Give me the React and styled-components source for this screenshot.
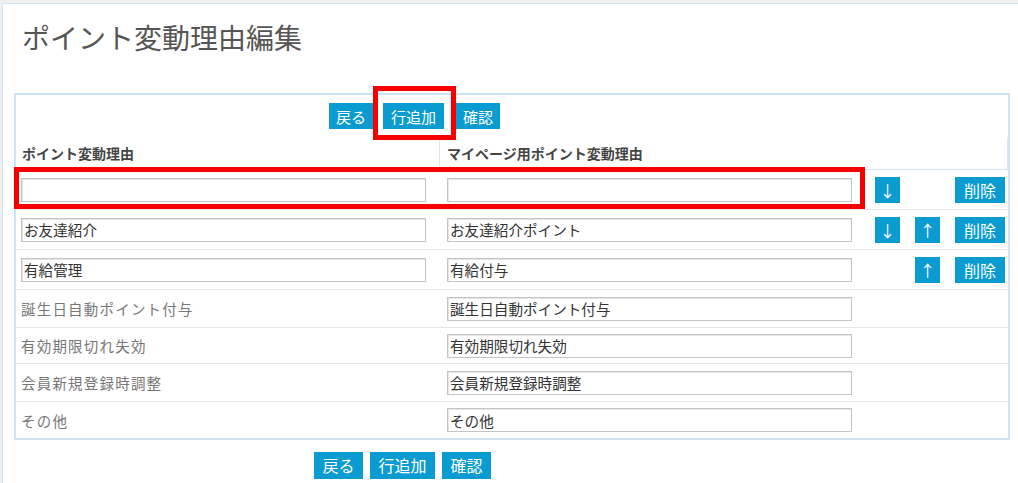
import React from "react";
import styled, { createGlobalStyle } from "styled-components";

const GlobalStyle = createGlobalStyle`
  html, body { margin: 0; padding: 0; }
  body {
    background: #efefef;
    font-family: "Noto Sans CJK JP", "Noto Sans", sans-serif;
    color: #333;
  }
`;

const Panel = styled.div`
  margin: 3px 0 0 2px;
  min-height: 480px;
  background: #fff;
  border-top: 1px solid #cfe4f5;
  border-left: 1px solid #cfe4f5;
`;

const Title = styled.h1`
  margin: 0;
  padding: 13px 0 0 19px;
  font-size: 28px;
  line-height: 40px;
  font-weight: 400;
  color: #555;
`;

const Box = styled.div`
  box-sizing: border-box;
  width: 996px;
  margin: 36px 0 0 11px;
  border: 2px solid #cfe3f4;
`;

const Toolbar = styled.div`
  display: flex;
  align-items: center;
  height: 42px;
  padding-left: ${(p) => p.$pl}px;
  margin-top: ${(p) => p.$mt || 0}px;
  gap: ${(p) => p.$gap || 0}px;
`;

const Button = styled.button`
  box-sizing: border-box;
  height: ${(p) => p.$h || 26}px;
  min-width: ${(p) => p.$w || 0}px;
  padding: 0 ${(p) => p.$px ?? 7}px;
  margin: 0 ${(p) => p.$mr || 0}px 0 0;
  border: none;
  background: #0a9bd0;
  color: #fff;
  font-family: "Noto Sans CJK JP", sans-serif;
  font-size: ${(p) => p.$fs || 15}px;
  line-height: 1;
  cursor: pointer;
  display: inline-flex;
  align-items: center;
  justify-content: center;
`;

const Marked = styled.span`
  position: relative;
  display: inline-flex;
`;

const Highlight = styled.span`
  position: absolute;
  top: ${(p) => p.$t}px;
  left: ${(p) => p.$l}px;
  right: ${(p) => p.$r}px;
  bottom: ${(p) => p.$b}px;
  border: 5px solid #f80000;
  pointer-events: none;
`;

const HeaderRow = styled.div`
  display: grid;
  grid-template-columns: 424px 1fr;
  height: 33px;
  box-sizing: border-box;
  border-bottom: 1px solid #cfe3f4;
`;

const HeaderCell = styled.div`
  display: flex;
  align-items: center;
  padding-left: ${(p) => p.$pl}px;
  font-size: 14px;
  font-weight: 700;
  color: #444;
  border-right: 1px solid #d8e7f4;
`;

const Row = styled.div`
  position: relative;
  display: grid;
  grid-template-columns: 424px 426px 1fr;
  align-items: center;
  box-sizing: border-box;
  height: ${(p) => p.$h}px;
  border-bottom: ${(p) => (p.$last ? "none" : "1px solid #e6e6e6")};
`;

const Cell = styled.div`
  padding-left: ${(p) => p.$pl}px;
  display: flex;
  align-items: center;
`;

const Input = styled.input`
  box-sizing: border-box;
  width: 405px;
  height: 24px;
  padding: 0 2px;
  border: 1px solid #c4c4c4;
  box-shadow: inset 1px 1px 0 #e6e6e6;
  font-family: "Noto Sans CJK JP", sans-serif;
  font-size: 14.6px;
  color: #333;
  background: #fff;
  outline: none;
`;

const Label = styled.span`
  font-size: 14.5px;
  letter-spacing: 1.2px;
  color: #777;
`;

const Actions = styled.div`
  display: grid;
  grid-template-columns: 40px 40px 50px;
  padding-left: 9px;
  align-items: center;
`;

const rows = [
  { a: "", b: "", input: true, down: true, up: false, del: true, h: 40, mark: true },
  { a: "お友達紹介", b: "お友達紹介ポイント", input: true, down: true, up: true, del: true, h: 40 },
  { a: "有給管理", b: "有給付与", input: true, down: false, up: true, del: true, h: 40 },
  { a: "誕生日自動ポイント付与", b: "誕生日自動ポイント付与", input: false, h: 38 },
  { a: "有効期限切れ失効", b: "有効期限切れ失効", input: false, h: 36 },
  { a: "会員新規登録時調整", b: "会員新規登録時調整", input: false, h: 38 },
  { a: "その他", b: "その他", input: false, h: 36 },
];

export default function App() {
  return (
    <>
      <GlobalStyle />
      <Panel>
        <Title>ポイント変動理由編集</Title>
        <Box>
          <Toolbar $pl={313}>
            <Button $mr={10}>戻る</Button>
            <Marked>
              <Button $mr={12} $px={8}>行追加</Button>
              <Highlight $t={-17} $l={-10} $r={0} $b={-11} />
            </Marked>
            <Button>確認</Button>
          </Toolbar>
          <HeaderRow>
            <HeaderCell $pl={6}>ポイント変動理由</HeaderCell>
            <HeaderCell $pl={7}>マイページ用ポイント変動理由</HeaderCell>
          </HeaderRow>
          {rows.map((r, i) => (
            <Row key={i} $h={r.h} $last={i === rows.length - 1}>
              <Cell $pl={5}>
                {r.input ? <Input defaultValue={r.a} /> : <Label>{r.a}</Label>}
              </Cell>
              <Cell $pl={7}>
                <Input defaultValue={r.b} />
              </Cell>
              <Actions>
                <span>{r.down && <Button $w={25} $px={0} $fs={16}>↓</Button>}</span>
                <span>{r.up && <Button $w={25} $px={0} $fs={16}>↑</Button>}</span>
                <span>{r.del && <Button $w={50} $px={0} $fs={16}>削除</Button>}</span>
              </Actions>
              {r.mark && <Highlight $t={-3} $l={-2} $r={143} $b={0} />}
            </Row>
          ))}
        </Box>
        <Toolbar $pl={311} $mt={4} $gap={7}>
          <Button $h={27} $fs={16} $px={8.5}>戻る</Button>
          <Button $h={27} $fs={16} $px={8.5}>行追加</Button>
          <Button $h={27} $fs={16} $px={8.5}>確認</Button>
        </Toolbar>
      </Panel>
    </>
  );
}
